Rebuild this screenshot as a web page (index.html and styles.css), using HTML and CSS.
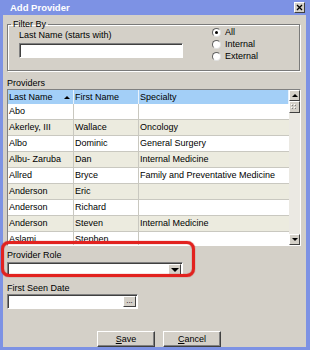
FILE: index.html
```html
<!DOCTYPE html>
<html lang="en">
<head>
  <meta charset="UTF-8">
  <meta name="viewport" content="width=device-width, initial-scale=1.0">
  <title>Add Provider</title>
  <link rel="stylesheet" href="styles.css">
</head>
<body>
  <div class="window">
    <div class="titlebar">
      <span class="title">Add Provider</span>
      <span class="close">
        <svg width="7" height="7" viewBox="0 0 7 7"><path d="M1 1L6 6M6 1L1 6" stroke="#000" stroke-width="1.3"/></svg>
      </span>
    </div>

    <div class="client">
      <fieldset class="filter">
        <legend>Filter By</legend>
        <div class="filter-body">
          <div class="name-field">
            <div class="lbl">Last Name (starts with)</div>
            <div class="text name-input"></div>
          </div>
          <div class="radios">
            <div class="radio"><span class="dot checked"></span>All</div>
            <div class="radio"><span class="dot"></span>Internal</div>
            <div class="radio"><span class="dot"></span>External</div>
          </div>
        </div>
      </fieldset>

      <div class="lbl providers-lbl">Providers</div>
      <div class="list">
        <div class="grid">
          <div class="row head">
            <div class="c c1">Last Name <span class="sort"></span></div>
            <div class="c c2">First Name</div>
            <div class="c c3">Specialty</div>
          </div>
          <div class="row"><div class="c c1">Abo</div><div class="c c2"></div><div class="c c3"></div></div>
          <div class="row alt"><div class="c c1">Akerley, III</div><div class="c c2">Wallace</div><div class="c c3">Oncology</div></div>
          <div class="row"><div class="c c1">Albo</div><div class="c c2">Dominic</div><div class="c c3">General Surgery</div></div>
          <div class="row alt"><div class="c c1">Albu- Zaruba</div><div class="c c2">Dan</div><div class="c c3">Internal Medicine</div></div>
          <div class="row"><div class="c c1">Allred</div><div class="c c2">Bryce</div><div class="c c3">Family and Preventative Medicine</div></div>
          <div class="row alt"><div class="c c1">Anderson</div><div class="c c2">Eric</div><div class="c c3"></div></div>
          <div class="row"><div class="c c1">Anderson</div><div class="c c2">Richard</div><div class="c c3"></div></div>
          <div class="row alt"><div class="c c1">Anderson</div><div class="c c2">Steven</div><div class="c c3">Internal Medicine</div></div>
          <div class="row"><div class="c c1">Aslami</div><div class="c c2">Stephen</div><div class="c c3"></div></div>
        </div>
        <div class="vscroll">
          <div class="sbtn"><span class="arrow up"></span></div>
          <div class="sbtn thumb">
            <svg width="7" height="7" viewBox="0 0 7 7">
              <g fill="#808080"><rect x="1" y="1" width="1" height="1"/><rect x="4" y="1" width="1" height="1"/><rect x="1" y="4" width="1" height="1"/><rect x="4" y="4" width="1" height="1"/></g>
              <g fill="#fff"><rect x="0" y="0" width="1" height="1"/><rect x="3" y="0" width="1" height="1"/><rect x="0" y="3" width="1" height="1"/><rect x="3" y="3" width="1" height="1"/></g>
            </svg>
          </div>
          <div class="track"></div>
          <div class="sbtn"><span class="arrow down"></span></div>
        </div>
      </div>

      <div class="lbl role-lbl">Provider Role</div>
      <div class="text combo">
        <div class="drop"><span class="arrow down"></span></div>
      </div>

      <div class="lbl seen-lbl">First Seen Date</div>
      <div class="text date">
        <div class="dots">...</div>
      </div>

      <div class="buttons">
        <div class="btn"><u>S</u>ave</div>
        <div class="btn"><u>C</u>ancel</div>
      </div>
    </div>

    <div class="highlight"></div>
  </div>
</body>
</html>
```

FILE: styles.css
```css
html, body {margin: 0; height: 100%; overflow: hidden}
body {
  background: #d4d0c8;
  font-family: "Liberation Sans", Arial, sans-serif;
  font-size: 9px;
  line-height: 11px;
  color: #000;
}

/* window frame */
.window {
  position: relative;
  width: 310px;
  height: 350px;
  box-sizing: border-box;
  display: flex;
  flex-direction: column;
  background: #7d92e4;
  padding: 0 4px 3px 3px;
}
.titlebar {
  height: 15px;
  display: flex;
  align-items: center;
  padding-left: 7px;
}
.title {
  color: #fff;
  font-weight: bold;
  font-size: 9.5px;
}
.close {
  margin-left: auto;
  margin-right: 1px;
  width: 9px;
  height: 9px;
  display: flex;
  align-items: center;
  justify-content: center;
  background: #d4d0c8;
  border: 1px solid;
  border-color: #fff #404040 #404040 #fff;
}
.client {
  flex: 1;
  background: #d4d0c8;
  display: flex;
  flex-direction: column;
  padding: 0 5px 0 4px;
}
.lbl {
  white-space: nowrap;
}

/* filter group */
.filter {
  margin: 4px 1px 0 0;
  padding: 0;
  border: 1px solid #7a7a7a;
  box-shadow: inset 1px 1px 0 #fff, 1px 1px 0 #fff;
  min-width: 0;
}
.filter legend {
  margin-left: 3px;
  padding: 0 2px;
}
.filter-body {
  display: flex;
  padding: 0 0 8px 11px;
}
.name-input {
  width: 164px;
  height: 15px;
  margin-top: 2px;
}
.text {
  box-sizing: border-box;
  background: #fff;
  border: 1px solid;
  border-color: #808080 #fff #fff #808080;
  box-shadow: inset 1px 1px 0 #404040;
}
.radios {
  margin: -4px 0 0 29px;
}
.radio {
  height: 12px;
  display: flex;
  align-items: center;
}
.dot {
  position: relative;
  box-sizing: border-box;
  width: 9px;
  height: 9px;
  margin-right: 4px;
  border-radius: 50%;
  background: #fff;
  border: 1px solid;
  border-color: #606060 #e0e0e0 #e0e0e0 #606060;
}
.dot.checked::after {
  content: "";
  position: absolute;
  left: 2px;
  top: 2px;
  width: 3px;
  height: 3px;
  border-radius: 50%;
  background: #000;
}

/* providers list */
.providers-lbl {
  margin-top: 7px;
}
.list {
  display: flex;
  height: 157px;
  box-sizing: border-box;
  border: 1px solid;
  border-color: #808080 #fff #fff #808080;
  overflow: hidden;
}
.grid {
  flex: 1;
  background: #fff;
  overflow: hidden;
}
.row {
  display: flex;
  height: 16px;
  box-sizing: border-box;
  border-bottom: 1px solid #c9c8c0;
}
.row.alt {
  background: #ecebdf;
}
.row.head {
  height: 14px;
  background: #a3cff7;
  border-bottom: 0;
}
.c {
  box-sizing: border-box;
  padding-left: 1px;
  display: flex;
  align-items: center;
  white-space: nowrap;
  overflow: hidden;
  border-right: 1px solid #c9c8c0;
}
.head .c {
  border-right: 1px solid #e8f2fc;
}
.c1 { width: 66px; }
.c2 { width: 65px; }
.c3 { flex: 1; border-right: 0; }
.c1 .sort {
  margin: 0 3px 0 auto;
  width: 0;
  height: 0;
  border-left: 3px solid transparent;
  border-right: 3px solid transparent;
  border-bottom: 3px solid #000;
}

/* scrollbar */
.vscroll {
  width: 11px;
  display: flex;
  flex-direction: column;
  background: #ebe9e3;
}
.sbtn {
  box-sizing: border-box;
  height: 11px;
  display: flex;
  align-items: center;
  justify-content: center;
  background: #d4d0c8;
  border: 1px solid;
  border-color: #fff #404040 #404040 #fff;
}
.thumb {
  height: 12px;
}
.track {
  flex: 1;
}
.arrow {
  width: 0;
  height: 0;
  border-left: 3px solid transparent;
  border-right: 3px solid transparent;
}
.arrow.up { border-bottom: 3px solid #000; }
.arrow.down { border-top: 3px solid #000; }

/* lower fields */
.role-lbl {
  margin-top: 4px;
}
.combo {
  width: 176px;
  height: 15px;
  margin-top: 1px;
  display: flex;
  justify-content: flex-end;
  padding: 1px;
}
.drop, .dots {
  box-sizing: border-box;
  width: 13px;
  display: flex;
  align-items: center;
  justify-content: center;
  background: #d4d0c8;
  border: 1px solid;
  border-color: #fff #404040 #404040 #fff;
}
.drop .arrow.down {
  border-left-width: 4px;
  border-right-width: 4px;
  border-top-width: 4px;
}
.seen-lbl {
  margin-top: 6px;
}
.date {
  width: 131px;
  height: 15px;
  display: flex;
  justify-content: flex-end;
  padding: 1px;
}
.dots {
  font-size: 8px;
  line-height: 8px;
  align-items: flex-start;
}

/* buttons */
.buttons {
  display: flex;
  gap: 8px;
  margin: 22px 0 0 90px;
}
.btn {
  box-sizing: border-box;
  width: 58px;
  height: 16px;
  display: flex;
  align-items: center;
  justify-content: center;
  border: 1px solid;
  border-color: #fff #404040 #404040 #fff;
  box-shadow: inset -1px -1px 0 #808080;
}

/* red callout drawn over the role field */
.highlight {
  position: absolute;
  left: 1px;
  top: 241px;
  width: 188px;
  height: 30px;
  border: 3px solid #e2221f;
  border-radius: 8px;
  box-shadow: 0 0 1px #a00, inset 0 0 1px #a00;
}
```
